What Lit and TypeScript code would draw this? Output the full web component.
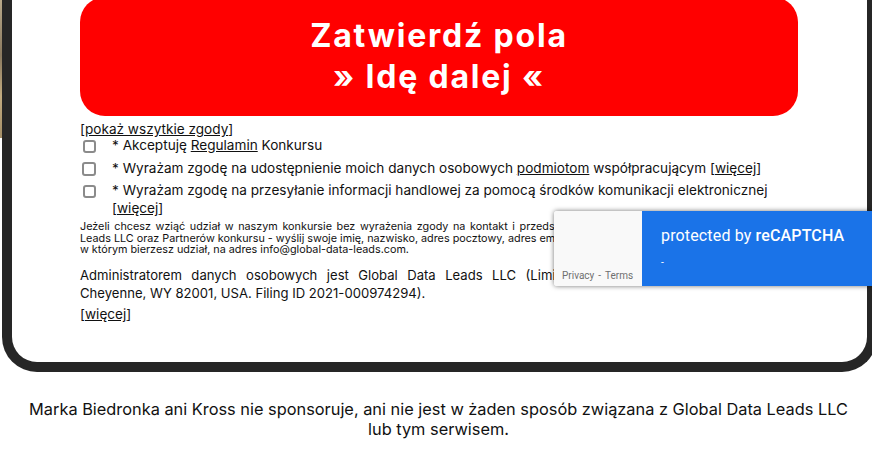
import { LitElement, html, css } from "lit";
import { customElement } from "lit/decorators.js";

@customElement("app-root")
export class AppRoot extends LitElement {
  static styles = css`
    :host { display: block; width: 872px; height: 456px; overflow: hidden; position: relative; background: #fff; font-family: "Inter", "Liberation Sans", sans-serif; color: #111; }
    .page { width: 877px; display: flow-root; background: linear-gradient(180deg, #b9a98a, #8a7a60 40%, #c2ab80 70%, #a58f68) no-repeat left top / 2px 138px; }
    .card { display: flow-root; margin-left: 2px; width: 875px; height: 372px; box-sizing: border-box; border: 10px solid #262626; border-top: 0; border-radius: 0 0 35px 35px; background: #fff; padding-left: 68px; padding-right: 69px; }
    .cta { margin-top: -3px; height: 119px; width: 718px; background: #f00; border: 0; border-radius: 25px; color: #fff; font: 700 32px/41px "Inter", sans-serif; letter-spacing: 1.8px; display: flex; align-items: center; justify-content: center; text-align: center; padding: 0 0 2px; box-sizing: border-box; }
    a { color: inherit; text-decoration: underline; }
    .all { font-size: 13.6px; line-height: 16px; margin-top: 5px; }
    .row { display: flex; gap: 16px; padding-left: 3px; font-size: 13.6px; line-height: 18px; }
    .r1 { margin-top: -1px; }
    .r2 { margin-top: 5px; }
    .r3 { margin-top: 4px; }
    .box { appearance: none; flex: none; width: 13px; height: 13px; box-sizing: border-box; margin: 4px 0 0 0; border: 2px solid #8b8b8b; border-radius: 3px; background: #fff; }
    .r2 .box { width: 14px; height: 14px; margin: 3px 0 0 -1px; }
    .small { font-size: 10.8px; line-height: 11.5px; margin-top: 4px; }
    .admin { font-size: 13.1px; line-height: 18px; margin-top: 10.5px; }
    .just { display: block; text-align: justify; text-align-last: justify; }
    .more { font-size: 13.6px; line-height: 18px; margin-top: 3px; }
    .foot { font-size: 16.35px; line-height: 20px; text-align: center; margin: 27px 20px 0; }
    .badge { position: absolute; left: 554px; top: 211px; width: 318px; height: 75px; display: flex; box-shadow: 0 0 5px rgba(0,0,0,.55); border-radius: 3px 0 0 3px; overflow: hidden; font-family: "Roboto", sans-serif; }
    .side { width: 88px; background: #f9f9f9; display: flex; align-items: flex-end; padding: 0 0 4px 8px; box-sizing: border-box; font-size: 10px; line-height: 12px; color: #6f6f6f; white-space: nowrap; gap: 4px; }
    .blue { flex: 1; background: #1a73e8; color: #fff; padding: 15px 0 0 19px; font-size: 16px; line-height: 19px; letter-spacing: .15px; }
    .blue b { font-weight: 500; }
    .dash { font-size: 10px; line-height: 12px; margin-top: 12px; }
  `;
  render() {
    return html`
      <div class="page">
        <div class="card">
          <button class="cta">Zatwierdź pola<br />» Idę dalej «</button>
          <div class="all">[<a href="#">pokaż wszytkie zgody</a>]</div>
          <div class="row r1"><input class="box" type="checkbox" /><span>* Akceptuję <a href="#">Regulamin</a> Konkursu</span></div>
          <div class="row r2"><input class="box" type="checkbox" /><span>* Wyrażam zgodę na udostępnienie moich danych osobowych <a href="#">podmiotom</a> współpracującym [<a href="#">więcej</a>]</span></div>
          <div class="row r3"><input class="box" type="checkbox" /><span>* Wyrażam zgodę na przesyłanie informacji handlowej za pomocą środków komunikacji elektronicznej [<a href="#">więcej</a>]</span></div>
          <div class="small"><span class="just">Jeżeli chcesz wziąć udział w naszym konkursie bez wyrażenia zgody na kontakt i przedstawienia ofert marketingowych od Global Data</span>Leads LLC oraz Partnerów konkursu - wyślij swoje imię, nazwisko, adres pocztowy, adres email oraz nazwę konkursu,<br />w którym bierzesz udział, na adres info@global-data-leads.com.</div>
          <div class="admin"><span class="just">Administratorem danych osobowych jest Global Data Leads LLC (Limited Liability Company) 1712 Pioneer</span>Cheyenne, WY 82001, USA. Filing ID 2021-000974294).</div>
          <div class="more">[<a href="#">więcej</a>]</div>
        </div>
        <div class="foot">Marka Biedronka ani Kross nie sponsoruje, ani nie jest w żaden sposób związana z Global Data Leads LLC lub tym serwisem.</div>
      </div>
      <div class="badge">
        <div class="side"><span>Privacy</span><span>-</span><span>Terms</span></div>
        <div class="blue"><div>protected by <b>reCAPTCHA</b></div><div class="dash">-</div></div>
      </div>
    `;
  }
}
